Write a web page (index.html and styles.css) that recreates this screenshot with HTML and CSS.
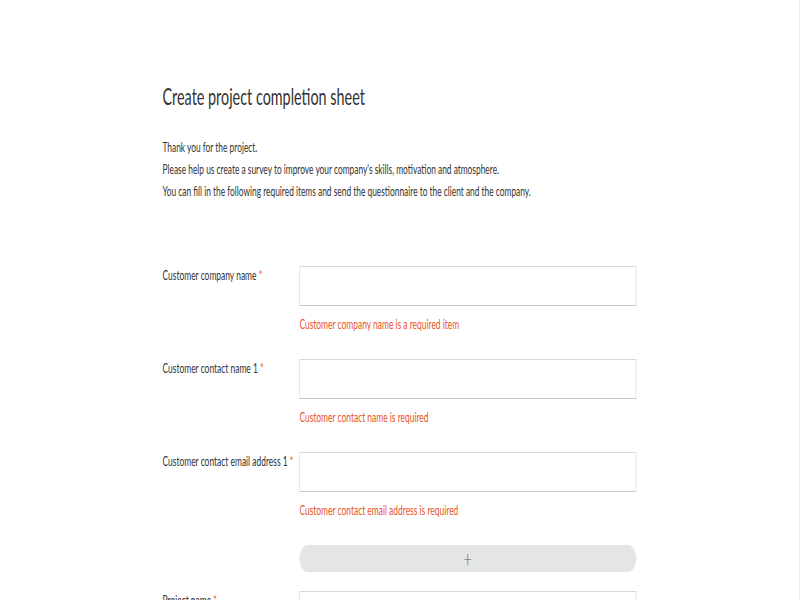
FILE: index.html
```html
<!DOCTYPE html>
<html>
<head>
<meta charset="utf-8">
<link rel="stylesheet" href="styles.css">
</head>
<body>
<div class="viewport">
<main class="page">
  <h1 class="title">Create project completion sheet</h1>
  <div class="intro">
    <p>Thank you for the project.</p>
    <p>Please help us create a survey to improve your company's skills, motivation and atmosphere.</p>
    <p>You can fill in the following required items and send the questionnaire to the client and the company.</p>
  </div>
  <form class="form">
    <div class="row">
      <label class="label">Customer company name <span class="req">*</span></label>
      <div class="field">
        <input class="input" type="text">
        <div class="error">Customer company name is a required item</div>
      </div>
    </div>
    <div class="row">
      <label class="label">Customer contact name 1 <span class="req">*</span></label>
      <div class="field">
        <input class="input" type="text">
        <div class="error">Customer contact name is required</div>
      </div>
    </div>
    <div class="row">
      <label class="label">Customer contact email address 1 <span class="req">*</span></label>
      <div class="field">
        <input class="input" type="text">
        <div class="error">Customer contact email address is required</div>
      </div>
    </div>
    <div class="row add-row">
      <div></div>
      <button class="add" type="button">+</button>
    </div>
    <div class="row">
      <label class="label">Project name <span class="req">*</span></label>
      <div class="field">
        <input class="input" type="text">
      </div>
    </div>
  </form>
</main>
</div>
</body>
</html>
```
FILE: styles.css
```css
html {
  margin: 0;
  padding: 0;
  background: #fff;
  height: 600px;
  overflow: hidden;
  border-right: 1px solid #ececec;
  box-sizing: border-box;
}
body {
  margin: 0;
  padding: 0;
  height: 600px;
  overflow: hidden;
  font-family: Lato, "Open Sans", sans-serif;
  color: #333;
}
/* the reference is a 1280px-wide page squeezed into 800px */
.viewport {
  width: 1280px;
  transform: scaleX(0.625);
  transform-origin: 0 0;
}
.page {
  width: 760px;
  margin: 0 auto;
  padding-top: 81px;
}
.title {
  font-size: 23px;
  font-weight: 400;
  margin: 0 0 25px;
  line-height: 30px;
  color: #333;
}
.intro p {
  margin: 0;
  font-size: 13.4px;
  line-height: 22px;
}
.form {
  margin-top: 64px;
}
.row {
  display: grid;
  grid-template-columns: 219px 539px;
  margin-bottom: 27px;
}
.label {
  font-size: 13.5px;
  padding-top: 1px;
  line-height: 16px;
  white-space: nowrap;
}
.req {
  color: #e8542a;
}
.input {
  display: block;
  box-sizing: border-box;
  width: 100%;
  height: 40px;
  border: 1px solid #dadada;
  border-bottom-color: #c8c8c8;
  border-radius: 0;
  margin: 0;
  background: #fff;
}
.error {
  color: #e8542a;
  font-size: 13.5px;
  line-height: 16px;
  margin-top: 10px;
}
.add-row {
  margin-top: 24px;
  margin-bottom: 19px;
}
.add {
  height: 27px;
  border: none;
  border-radius: 14px;
  background: #e5e5e5;
  color: #555;
  font-size: 18px;
  font-family: "DejaVu Sans", sans-serif;
  font-weight: 200;
  padding: 0;
  line-height: 27px;
}
```
